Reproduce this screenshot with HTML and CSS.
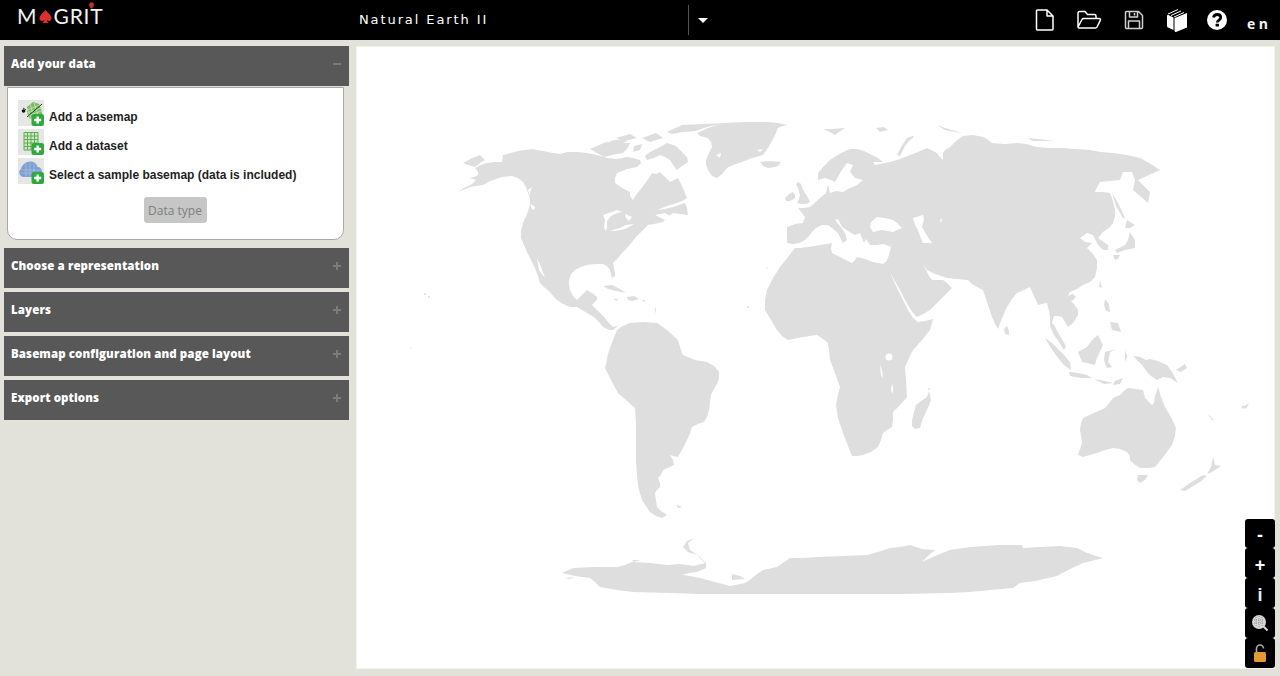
FILE: index.html
```html
<!DOCTYPE html>
<html lang="en">
<head>
<meta charset="utf-8">
<title>Magrit</title>
<link rel="stylesheet" href="styles.css">
</head>
<body>
<header class="topbar">
  <div class="logo">
    <span>M</span>
    <svg class="spade" viewBox="0 0 16 16"><path d="M8 1C6 4 1.500 6.500 1.500 10c0 2.500 3 3.500 5 2-.2 1.200-.8 2-1.800 3h6.600c-1-1-1.600-1.800-1.800-3 2 1.500 5 .5 5-2C14.500 6.500 10 4 8 1z"/></svg>
    <span class="logo-rest">GRIT<svg class="pin" viewBox="0 0 6 8"><path d="M3 0a3 3 0 0 1 3 3c0 2-3 5-3 5S0 5 0 3a3 3 0 0 1 3-3z"/></svg></span>
  </div>
  <div class="project">
    <span class="project-name">Natural Earth II</span>
    <span class="caret"></span>
  </div>
  <nav class="tools">
    <svg class="tool" width="20" height="22" viewBox="0 0 20 22"><path class="line" d="M2.500 1h9.500l6 6v13a1 1 0 0 1-1 1H2.500a1 1 0 0 1-1-1V2a1 1 0 0 1 1-1zM12 1v6h6"/></svg>
    <svg class="tool" width="26" height="20" viewBox="0 0 26 20"><path class="line" d="M2 17V3a1.500 1.500 0 0 1 1.500-1.500H9l2.500 3h7A1.500 1.500 0 0 1 20 6v2.500M2 17l4-7.500a2 2 0 0 1 1.700-1h15.500c1 0 1.600 1 1.100 1.800L21 17a2 2 0 0 1-1.700 1H3a1 1 0 0 1-1-1z"/></svg>
    <svg class="tool" width="20" height="20" viewBox="0 0 20 20"><path class="line dim" d="M2.500 1.500h12l4 4v12a1 1 0 0 1-1 1h-15a1 1 0 0 1-1-1v-15a1 1 0 0 1 1-1zM5.500 1.500v5.500h8V1.500M4.500 18.500V11h11v7.500M10.500 3v2.500"/></svg>
    <svg class="tool" width="22" height="24" viewBox="0 0 22 24"><path class="solid" d="M10 9.500 21 5v14.500L10 24c-1 0-1.500-.7-1.500-1.500V11c0-.8.500-1.300 1.500-1.500zM7.500 9.500V22L2 19.500c-.6-.3-1-.8-1-1.500V8c0-.5.300-1 .8-1.200z"/><path class="line thin" d="M2 6 12 1.500M5 7.500 15 3M8 9l10-4.500"/></svg>
    <svg class="tool" width="20" height="20" viewBox="0 0 20 20"><circle class="solid" cx="10" cy="10" r="10"/><path class="qmark" d="M6.500 7.500C7 5.300 8.500 4.500 10.200 4.500c2 0 3.500 1.200 3.500 3 0 2.600-3.400 2.700-3.400 5"/><rect class="qdot" x="8.600" y="13.700" width="3.400" height="2.800" rx=".5"/></svg>
    <span class="lang">en</span>
  </nav>
</header>

<main class="main">
  <aside class="sidebar">
    <section class="section">
      <h2 class="section-head">Add your data<span class="sign sign-minus"></span></h2>
      <div class="panel">
        <div class="item">
          <svg class="item-icon" viewBox="0 0 26 26">
            <rect class="icon-bg" width="26" height="26"/>
            <path class="icon-green" d="M9 7l6-5 6 2 2 5 1 5-6 6-6-1-3-6z"/>
            <path class="icon-mesh" d="M9 10l13-5M9 13l14-5M10 16l13-5M12 19l10-5M12 4l5 16M16 3l5 15M9 8l5 12"/>
            <path class="icon-dark" d="M9 17 24 4"/>
            <circle class="icon-black" cx="5.500" cy="11" r="1.800"/>
            <path class="icon-dark" d="M5 8l3 2"/>
            <g class="plus-badge"><rect x="13.500" y="14" width="12.500" height="12" rx="2.500"/><path d="M19.700 16.500v7M16.200 20h7"/></g>
          </svg>
          <span>Add a basemap</span>
        </div>
        <div class="item">
          <svg class="item-icon" viewBox="0 0 26 26">
            <rect class="icon-bg" width="26" height="26"/>
            <rect class="icon-pale" x="6" y="3" width="14" height="18"/>
            <path class="icon-grid" d="M6 3.500h14V21H6zM6 7h14M6 10.500h14M6 14h14M6 17.500h14M9.500 3v18M13 3v18M16.500 3v18"/>
            <g class="plus-badge"><rect x="13.500" y="14" width="12.500" height="12" rx="2.500"/><path d="M19.700 16.500v7M16.200 20h7"/></g>
          </svg>
          <span>Add a dataset</span>
        </div>
        <div class="item">
          <svg class="item-icon" viewBox="0 0 26 26">
            <rect class="icon-bg" width="26" height="26"/>
            <path class="icon-cloud" d="M6 19a4.500 4.500 0 0 1-3-8C4 6 9 3 13 3.500c3.500.3 6 2.500 6.500 5.500 3 0 4.500 2 4.500 5s-2 5-5 5z"/>
            <path class="icon-cloud-mesh" d="M3 12h21M3 15h21M8 5v14M12 4v15M16 4v15"/>
            <g class="plus-badge"><rect x="13.500" y="14" width="12.500" height="12" rx="2.500"/><path d="M19.700 16.500v7M16.200 20h7"/></g>
          </svg>
          <span>Select a sample basemap (data is included)</span>
        </div>
        <div class="panel-foot"><button class="data-type" type="button">Data type</button></div>
      </div>
    </section>
    <h2 class="section-head">Choose a representation<span class="sign sign-plus"></span></h2>
    <h2 class="section-head">Layers<span class="sign sign-plus"></span></h2>
    <h2 class="section-head">Basemap configuration and page layout<span class="sign sign-plus"></span></h2>
    <h2 class="section-head">Export options<span class="sign sign-plus"></span></h2>
  </aside>

  <div class="map">
    <svg class="map-svg" viewBox="357 47 917 621" preserveAspectRatio="none">
      <g class="land">
        <!-- North & Central America -->
        <path d="M458 192 470 187 483 185 490 181 502 177 512 176 518 178 523 182 526 187 528 193 530 199 530 205 527 214 523 223 521 231 521 238 524 245 527 252 531 260 535 268 538 276 540 283 545 288 550 292 554 297 557 300 563 304 570 307 577 307 582 310 587 313 592 316 595 318 600 323 603 327 607 329 610 330 613 330 618 326 613 327 608 322 604 317 600 313 596 309 592 305 597 300 597 297 592 293 587 290 581 296 577 300 573 296 570 290 569 285 569 280 571 274 575 270 581 267 587 265 595 264 603 264 607 266 610 270 611 274 612 278 615 276 615 273 614 268 613 263 618 258 622 253 627 248 632 242 636 237 640 233 644 229 648 225 654 224 663 222 668 217 673 213 680 214 688 215 687 208 685 203 679 205 673 207 665 209 657 210 667 206 677 203 682 201 687 198 683 188 678 178 674 180 670 182 665 177 660 172 656 174 652 173 647 181 640 190 636 195 633 200 630 196 630 192 622 188 615 183 615 178 617 173 627 169 637 167 641 163 640 160 633 158 627 157 617 159 607 158 597 155 587 153 577 152 567 152 560 154 553 153 543 151 532 149 518 151 503 155 502 162 494 162 487 163 481 165 475 168 478 172 478 175 474 177 470 178 476 180 472 184 464 188z"/>
        <path d="M463 163 472 158 480 155 485 160 480 163 475 167 468 165z"/>
        <path d="M667 132 682 125 705 124 725 123 707 127 696 131 683 132 672 134z"/>
        <path d="M610 141 622 139 628 141 620 144 612 144z"/>
        <path d="M616 138 630 134 637 138 625 141z"/>
        <path d="M642 138 656 133 663 138 650 142z"/>
        <path d="M650 152 660 147 667 143 676 146 687 157 688 162 682 166 677 170 673 165 670 160 665 157 660 155 654 158 647 160 645 156z"/>
        <path d="M597 153 590 149 606 142 620 143 630 143 627 149 623 153 612 155 604 157z"/>
        <path d="M634 146 642 144 640 150 633 152z"/>
        <path d="M612 162 618 160 624 164 616 167z"/>
        <!-- Caribbean -->
        <path d="M603 286 612 285 620 289 626 293 616 291 608 289z"/>
        <path d="M627 297 634 296 639 299 632 301 628 300z"/>
        <path d="M613 299 618 299 617 301z"/>
        <path d="M642 300 645 300 644 302z"/>
        <path d="M655 306 656 310 655 314z"/>
        <!-- Greenland -->
        <path d="M697 133 708 128 723 123 745 122 768 122 778 123 787 125 780 127 778 128 775 135 772 141 768 148 763 155 752 158 742 162 733 165 727 168 722 174 717 178 712 176 708 170 706 165 706 160 709 153 712 147 711 142 708 138 700 136z"/>
        <path d="M760 162 770 161 781 162 778 166 775 167 768 168 763 166z"/>
        <path d="M823 129 833 129 845 128 839 132 835 135 830 132z"/>
        <path d="M876 128 884 127 888 130 880 132z"/>
        <path d="M937 125 945 128 962 133 955 132 945 130z"/>
        <path d="M1028 138 1038 139 1054 141 1044 141 1033 141z"/>
        <path d="M897 155 901 147 907 138 913 136 914 137 909 141 905 146 902 152 900 156z"/>
        <path d="M798 182 801 184 803 190 807 196 810 202 806 204 802 204 797 203 799 199 800 195 798 188 796 184z"/>
        <path d="M785 198 789 194 793 192 795 195 795 198 790 201 786 201z"/>
        <!-- Eurasia -->
        <path d="M787 227 787 235 787 243 793 244 799 243 805 240 809 236 812 232 816 228 822 225 828 225 832 228 838 233 843 243 847 240 845 233 840 226 835 220 838 219 842 227 848 231 855 235 860 233 864 243 866 239 870 245 877 245 884 244 891 247 889 255 886 263 889 269 893 278 897 285 900 290 905 300 909 307 913 313 917 317 923 314 930 310 938 302 947 293 952 288 947 283 943 280 937 280 932 280 929 276 925 268 923 264 927 270 931 272 935 274 941 276 947 278 957 279 968 280 972 284 977 287 983 290 987 302 992 317 995 324 998 329 1002 318 1007 307 1012 299 1017 293 1024 290 1030 287 1034 296 1038 305 1042 304 1047 303 1049 311 1050 317 1050 326 1054 335 1059 342 1064 350 1066 346 1060 336 1054 325 1052 323 1054 316 1058 316 1062 317 1065 322 1068 327 1072 324 1075 320 1078 315 1078 310 1074 304 1067 297 1070 292 1077 289 1083 285 1090 282 1095 277 1097 268 1097 260 1093 254 1087 248 1092 243 1085 242 1080 238 1087 233 1093 235 1098 245 1103 250 1108 250 1108 245 1098 238 1103 232 1109 228 1113 223 1115 217 1115 210 1113 201 1110 193 1102 192 1095 192 1097 187 1100 182 1110 181 1120 180 1123 172 1132 172 1135 180 1134 185 1133 190 1140 196 1148 203 1150 192 1144 186 1138 180 1149 175 1160 170 1151 164 1140 158 1127 155 1113 153 1101 152 1090 150 1076 149 1063 148 1050 148 1037 147 1026 144 1017 143 1005 144 992 143 987 139 983 137 973 135 963 136 956 141 950 147 945 150 943 153 943 160 939 156 937 153 931 150 927 148 918 152 910 155 900 159 890 162 875 165 873 162 883 162 878 158 872 155 864 151 857 149 850 149 843 152 836 156 830 160 824 166 818 173 818 180 825 178 831 180 835 182 838 177 840 173 844 167 847 163 853 165 850 172 855 178 863 180 857 185 850 188 843 192 836 191 830 193 828 185 826 193 820 198 810 207 804 208 798 208 802 213 805 217 803 223 795 224z"/>
        <path d="M1112 193 1118 203 1125 218 1123 218 1116 206z"/>
        <path d="M1127 220 1135 225 1130 228 1125 228z"/>
        <path d="M1130 232 1135 240 1135 248 1125 250 1117 253 1115 250 1125 245 1128 240z"/>
        <path d="M1113 255 1120 255 1118 259 1115 260z"/>
        <path d="M1100 280 1102 288 1099 287z"/>
        <path d="M1067 296 1073 294 1076 297 1072 301 1068 300z"/>
        <path d="M1105 299 1109 304 1110 312 1106 311 1104 305z"/>
        <path d="M1110 322 1118 323 1121 332 1112 330z"/>
        <path d="M1007 326 1009 331 1009 335 1005 334 1004 329z"/>
        <path d="M1045 338 1052 343 1057 348 1064 355 1070 362 1071 370 1065 366 1058 358 1051 348z"/>
        <path d="M1069 372 1078 373 1087 375 1092 378 1081 378 1070 376z"/>
        <path d="M1094 379 1105 381 1113 383 1104 384z"/>
        <path d="M1115 381 1123 378 1120 384 1113 385z"/>
        <path d="M1098 335 1103 345 1097 358 1095 365 1087 363 1082 362 1080 357 1078 352 1087 347 1092 340z"/>
        <path d="M1105 352 1116 349 1110 352 1108 362 1112 367 1107 368 1104 360z"/>
        <path d="M1125 350 1127 356 1129 352 1125 362z"/>
        <path d="M1133 356 1140 357 1146 360 1150 359 1158 361 1167 365 1172 372 1178 383 1170 378 1163 377 1157 380 1151 376 1147 372 1142 365z"/>
        <path d="M1176 370 1185 364 1187 368 1181 372z"/>
        <!-- Australia -->
        <path d="M1158 387 1161 397 1165 407 1171 417 1176 428 1175 436 1172 445 1164 456 1155 467 1148 468 1140 468 1134 464 1130 460 1130 456 1127 452 1120 449 1113 448 1105 450 1097 453 1090 455 1083 457 1078 455 1080 449 1082 443 1081 436 1080 430 1081 423 1083 418 1094 413 1105 408 1110 402 1113 398 1120 395 1124 391 1128 388 1136 389 1143 390 1145 398 1152 405 1154 403 1155 396z"/>
        <path d="M1138 475 1148 475 1145 480 1140 483 1137 480z"/>
        <path d="M1180 490 1190 483 1203 475 1207 476 1200 482 1190 488 1185 491z"/>
        <path d="M1213 457 1215 465 1221 466 1215 470 1210 473 1207 474 1211 467z"/>
        <path d="M1207 413 1214 420 1212 420z"/>
        <path d="M1243 407 1249 403 1246 409z"/>
        <circle cx="1243" cy="407" r="1.500"/>
        <!-- Africa -->
        <path d="M795 248 800 248 815 246 832 243 831 248 832 253 842 258 852 263 855 260 857 257 865 259 873 262 883 264 888 260 890 268 892 277 897 288 903 300 908 310 913 318 918 322 925 321 933 319 930 330 922 340 913 350 909 358 905 367 906 380 907 397 900 405 893 412 893 420 892 427 887 430 883 433 881 440 878 447 871 452 863 455 857 456 852 456 848 446 843 433 838 418 836 405 838 395 840 387 835 373 830 360 829 350 828 343 823 339 817 335 803 337 788 340 782 336 777 330 771 320 765 310 765 300 767 290 773 278 780 267 788 257z"/>
        <path d="M929 391 931 400 927 410 923 418 920 428 915 429 912 426 912 420 914 412 916 405 921 401 927 397z"/>
        <!-- South America -->
        <path d="M606 360 610 348 617 330 623 326 630 323 643 322 657 323 667 330 678 340 681 350 683 355 695 360 707 362 714 366 719 372 719 378 718 382 714 389 711 395 710 402 709 410 707 417 704 422 698 424 692 427 690 433 688 438 683 448 678 457 673 456 670 455 673 460 674 465 668 468 663 470 661 475 658 478 660 483 660 487 657 490 655 493 656 500 657 507 661 511 667 515 662 518 656 516 650 512 646 506 642 500 639 490 637 477 636 460 636 440 636 424 635 408 626 400 618 393 611 380 605 368 608 356 613 345 610 352z"/>
        <path d="M676 505 680 506 682 507 678 508z"/>
        <!-- Antarctica -->
        <path d="M562 573 573 568 595 567 617 567 625 565 632 562 650 563 667 565 680 564 694 566 705 563 697 555 688 552 685 549 683 547 687 541 694 538 688 543 690 550 700 557 706 563 706 568 697 572 689 573 682 575 690 576 700 578 715 582 730 586 745 583 750 580 757 574 763 570 777 567 790 558 803 558 817 557 842 556 867 555 878 552 890 548 900 547 910 545 922 549 935 550 928 556 922 562 935 556 950 550 970 547 985 546 1000 545 1022 545 1023 548 1040 547 1060 546 1077 548 1085 552 1093 555 1103 558 1083 563 1070 569 1057 576 1035 581 1020 583 1013 588 990 590 970 592 950 593 900 594 850 594 800 594 750 594 700 594 670 593 633 592 617 590 600 587 595 582 590 578 575 576z"/>
        <path d="M732 574 740 576 745 579 732 580z"/>
        <path d="M632 560 640 560 634 562z"/>
        <path d="M565 578 575 577 570 579z"/>
        <!-- tiny islands -->
        <circle cx="425" cy="294" r="1"/>
        <circle cx="429" cy="297" r="1"/>
        <circle cx="411" cy="348" r=".6"/>
        <circle cx="748" cy="307" r="1"/>
        <circle cx="767" cy="268" r=".8"/>
        <circle cx="929" cy="389" r="1"/>
      </g>
      <g class="water">
        <path d="M603 215 612 212 617 210 622 212 617 213 611 216 607 221 607 228 606 231 604 228 605 220z"/>
        <path d="M610 231 620 228 626 225 634 224 625 229 615 231z"/>
        <path d="M625 214 632 217 629 221 626 218z"/>
        <path d="M655 215 665 213 670 216 665 220z"/>
        <path d="M532 187 530 192 530 196 528 190z"/>
        <path d="M531 204 535 207 534 210 531 208z"/>
        <path d="M537 258 541 267 545 278 539 270z"/>
        <path d="M871 222 877 217 885 218 893 220 897 223 902 228 893 232 882 230 873 232 870 227z"/>
        <path d="M913 218 923 215 924 219 922 227 926 234 932 243 923 243 920 236 918 230 915 225z"/>
        <path d="M941 218 942 221 940 222z"/>
        <circle cx="889" cy="357" r="3.500"/>
        <path d="M880 365 882 370 883 378 881 375z"/>
        <path d="M892 383 893 388 893 394 891 390z"/>
        <path d="M716 155 721 153 720 158z"/>
        <path d="M757 150 763 149 760 152z"/>
      </g>
    </svg>
    <div class="controls">
      <div class="ctrl ctrl-first"><span>-</span></div>
      <div class="ctrl ctrl-low"><span>+</span></div>
      <div class="ctrl ctrl-low ctrl-info"><span>i</span></div>
      <div class="ctrl">
        <svg width="18" height="18" viewBox="0 0 18 18"><circle class="glass-fill" cx="8" cy="8" r="7"/><path class="glass-dots" d="M3 6h10M3 9h10M5 3v10M8 2v12M11 3v10"/><path class="glass-handle" d="M12.500 12.500l4 4"/></svg>
      </div>
      <div class="ctrl">
        <svg width="14" height="19" viewBox="0 0 14 19"><path class="lock-arc" d="M3.500 8V4.500a3.500 3.500 0 0 1 7 0"/><rect class="lock-body" x="1" y="8" width="12" height="10" rx="1.500"/></svg>
      </div>
    </div>
  </div>
</main>
</body>
</html>
```
FILE: styles.css
```css
* { box-sizing: border-box; }
html, body { margin: 0; height: 100%; }
body {
  width: 1280px;
  height: 676px;
  overflow: hidden;
  background: #e2e2da;
  font-family: "Liberation Sans", sans-serif;
}

/* top bar */
.topbar {
  height: 40px;
  background: #000;
  display: flex;
  align-items: center;
  color: #fff;
}
.logo {
  width: 359px;
  padding: 0 0 9px 17px;
  display: flex;
  align-items: center;
  font-family: "Lato", sans-serif;
  font-size: 21px;
  line-height: 24px;
  color: #f2f2f2;
}
.spade { width: 15px; height: 15px; margin: 1px 1px 0 1px; fill: #d9302c; }
.logo-rest { position: relative; letter-spacing: .8px; }
.pin { position: absolute; right: 9px; top: -2px; width: 5px; height: 7px; fill: #c22d2a; }
.project {
  width: 370px;
  height: 30px;
  display: flex;
  align-items: center;
}
.project-name {
  width: 330px;
  height: 30px;
  line-height: 30px;
  border-right: 1px solid #555;
  font-family: "DejaVu Sans", sans-serif;
  font-size: 13px;
  letter-spacing: 1.900px;
}
.caret {
  margin-left: 9px;
  width: 0;
  height: 0;
  border-left: 5px solid transparent;
  border-right: 5px solid transparent;
  border-top: 5px solid #fff;
}
.tools {
  flex: 1;
  display: flex;
  align-items: center;
  padding-left: 306px;
}
.tool { display: block; flex: none; }
.tools .tool:nth-child(1) { margin-right: 21px; }
.tools .tool:nth-child(2) { margin-right: 22px; }
.tools .tool:nth-child(3) { margin-right: 22px; }
.tools .tool:nth-child(4) { margin-right: 19px; }
.line { fill: none; stroke: #fff; stroke-width: 1.500; stroke-linejoin: round; }
.line.dim { stroke: #cfcfcf; }
.line.thin { stroke-width: 1; }
.solid { fill: #fff; }
.qmark { fill: none; stroke: #000; stroke-width: 2.800; }
.qdot { fill: #000; }
.lang {
  margin-left: 20px;
  font-family: "Open Sans", sans-serif;
  font-size: 14px;
  font-weight: 700;
  letter-spacing: 3.500px;
  color: #f4f4f4;
  padding-top: 7px;
}

/* layout */
.main {
  height: 636px;
  display: flex;
  gap: 7px;
  padding: 6px 5px 7px 4px;
}
.sidebar {
  width: 345px;
  flex: none;
  display: flex;
  flex-direction: column;
  gap: 4px;
}
.section-head {
  position: relative;
  height: 40px;
  margin: 0;
  padding: 0 7px;
  background: #585858;
  color: #fff;
  font-family: "Open Sans", sans-serif;
  font-size: 11.500px;
  font-weight: 800;
  line-height: 36px;
  letter-spacing: .1px;
}
.sign {
  position: absolute;
  right: 8px;
  top: 14px;
  width: 8px;
  height: 8px;
  background: linear-gradient(#7c7c7c, #7c7c7c) center / 8px 2px no-repeat;
}
.sign-plus {
  background:
    linear-gradient(#7c7c7c, #7c7c7c) center / 8px 2px no-repeat,
    linear-gradient(#7c7c7c, #7c7c7c) center / 2px 8px no-repeat;
}
.section { margin-bottom: 4px; }
.panel {
  width: 337px;
  height: 153px;
  margin: 1px 0 0 3px;
  padding: 12px 0 0 10px;
  background: #fff;
  border: 1px solid #a8a8a8;
  border-radius: 0 0 10px 10px;
}
.item {
  height: 29px;
  display: flex;
  align-items: flex-end;
  gap: 5px;
  font-size: 12px;
  font-weight: 700;
  color: #1f1f24;
}
.item span { line-height: 14px; padding-bottom: 5px; }
.item-icon { width: 26px; height: 26px; flex: none; margin-bottom: 3px; }
.icon-bg { fill: #e6e6e4; }
.icon-green { fill: #78bb62; }
.icon-mesh { fill: none; stroke: #cfe8bd; stroke-width: .8; }
.icon-dark { fill: none; stroke: #2f3a2c; stroke-width: 1; }
.icon-black { fill: #111; }
.icon-pale { fill: #cfe6c2; }
.icon-grid { fill: none; stroke: #5fae52; stroke-width: 1; }
.icon-cloud { fill: #7e9fd1; }
.icon-cloud-mesh { fill: none; stroke: #a8c0e2; stroke-width: .8; }
.plus-badge rect { fill: #2fa83e; }
.plus-badge path { fill: none; stroke: #fff; stroke-width: 2.500; }
.panel-foot { display: flex; justify-content: center; padding: 10px 11px 0 0; }
.data-type {
  width: 63px;
  height: 26px;
  padding: 0;
  border: 0;
  border-radius: 3px;
  background: #c6c6c6;
  color: #7f7f7f;
  font-family: "Open Sans", sans-serif;
  font-size: 12px;
}

/* map */
.map {
  position: relative;
  flex: 1;
  background: #fff;
  border: 1px solid #f2f2ee;
}
.map-svg { display: block; width: 100%; height: 100%; }
.land { fill: #dedede; }
.water { fill: #fff; }
.controls {
  position: absolute;
  right: -1px;
  bottom: 0;
  width: 30px;
}
.ctrl {
  height: 30px;
  display: flex;
  align-items: center;
  justify-content: center;
  background: #000;
  border-radius: 3px;
  color: #fff;
  font-family: "Liberation Sans", sans-serif;
  font-size: 18px;
  font-weight: 700;
  line-height: 30px;
}
.ctrl-first { height: 29px; padding-top: 2px; }
.ctrl-low { padding-top: 3px; }
.ctrl-info { color: #d8f0ff; }
.glass-fill { fill: #d6d6d6; }
.glass-dots { fill: none; stroke: #8a8a9a; stroke-width: .8; stroke-dasharray: 1 1; }
.glass-handle { fill: none; stroke: #d6d6d6; stroke-width: 2; }
.lock-arc { fill: none; stroke: #aaa; stroke-width: 1.600; }
.lock-body { fill: #e39a32; }
```
